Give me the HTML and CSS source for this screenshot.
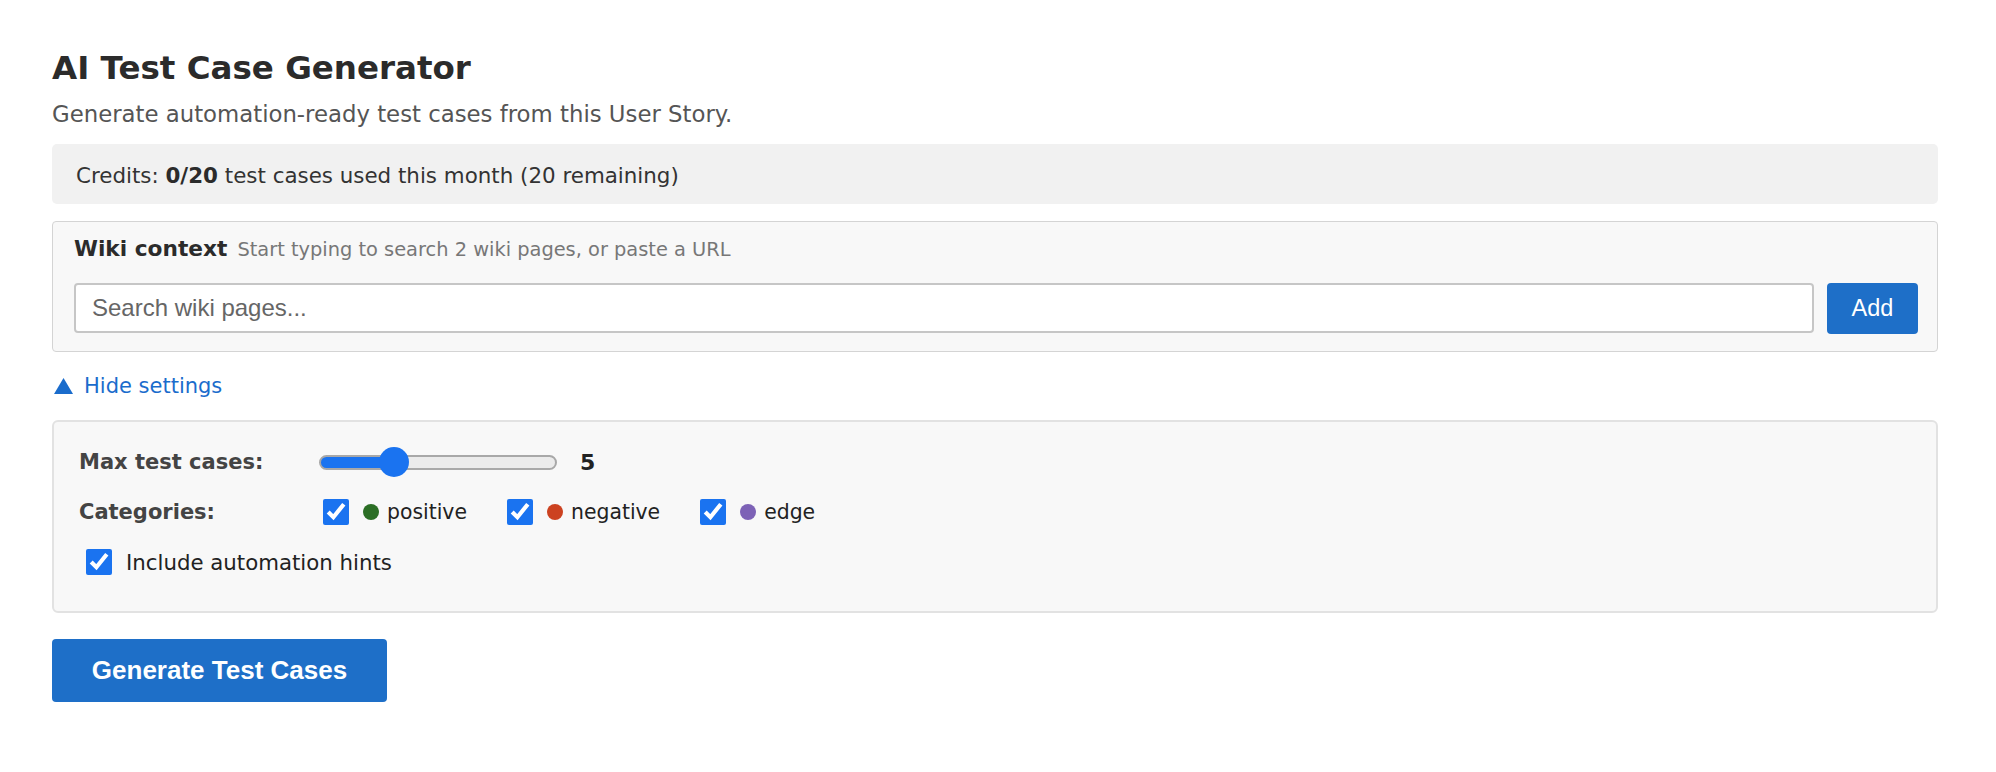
FILE: index.html
```html
<!DOCTYPE html>
<html lang="en">
<head>
  <meta charset="UTF-8" />
  <meta name="viewport" content="width=device-width, initial-scale=1" />
  <title>AI Test Case Generator</title>
  <link rel="stylesheet" href="styles.css">
</head>
<body>

<main class="generator">
  <h1 class="title">AI Test Case Generator</h1>
  <p class="subtitle">Generate automation-ready test cases from this User Story.</p>

  <div class="credits">Credits: <strong>0/20</strong> test cases used this month (20 remaining)</div>

  <!-- wiki pages picker -->
  <section class="wiki">
    <div class="wiki-head">
      <span class="wiki-label">Wiki context</span>
      <span class="wiki-help">Start typing to search 2 wiki pages, or paste a URL</span>
    </div>
    <div class="wiki-row">
      <input class="wiki-input" type="text" placeholder="Search wiki pages..." />
      <button class="btn btn-add">Add</button>
    </div>
  </section>

  <a class="toggle" href="#">
    <svg class="toggle-icon" width="19" height="16" viewBox="0 0 19 16"><polygon points="9.5,0 19,16 0,16" fill="currentColor"/></svg>
    Hide settings
  </a>

  <!-- generation settings -->
  <section class="settings">
    <div class="setting-row">
      <span class="setting-label">Max test cases:</span>
      <input class="range" type="range" min="1" max="15" value="5" />
      <span class="range-value">5</span>
    </div>
    <div class="setting-row">
      <span class="setting-label">Categories:</span>
      <div class="cats">
        <label class="cat"><input type="checkbox" checked /><span class="dot dot-positive"></span>positive</label>
        <label class="cat"><input type="checkbox" checked /><span class="dot dot-negative"></span>negative</label>
        <label class="cat"><input type="checkbox" checked /><span class="dot dot-edge"></span>edge</label>
      </div>
    </div>
    <label class="hints"><input type="checkbox" checked />Include automation hints</label>
  </section>

  <button class="btn btn-generate">Generate Test Cases</button>
</main>

</body>
</html>
```

FILE: styles.css
```css
*, *::before, *::after { margin: 0; padding: 0; box-sizing: border-box; }
body {
  font-family: Tahoma, 'DejaVu Sans', sans-serif;
  background: #fff;
  color: #333;
}
.generator {
  width: 1886px;
  margin-left: 52px;
  padding-top: 48px;
}
.title {
  font-size: 32.5px;
  line-height: 40px;
  font-weight: bold;
  color: #2b2b2b;
}
.subtitle {
  margin-top: 11px;
  font-size: 22.8px;
  line-height: 30px;
  color: #555;
}

.credits {
  margin-top: 15px;
  background: #f1f1f1;
  border-radius: 5px;
  padding: 17px 24px 13px;
  font-size: 21.4px;
  line-height: 30px;
  color: #333;
}
.credits strong { color: #2b2b2b; }

.wiki {
  margin-top: 17px;
  background: #f8f8f8;
  border: 1px solid #d4d4d4;
  border-radius: 4px;
  padding: 13px 19px 17px 21px;
}
.wiki-head {
  display: flex;
  align-items: baseline;
  gap: 10px;
  line-height: 28px;
}
.wiki-label {
  font-size: 21.7px;
  font-weight: bold;
  color: #2b2b2b;
}
.wiki-help {
  font-size: 19.4px;
  color: #777;
}
.wiki-row {
  display: flex;
  gap: 13px;
  margin-top: 19px;
}
.wiki-input {
  flex: 1;
  height: 50px;
  border: 2px solid #c6c6c6;
  border-radius: 4px;
  padding: 0 16px;
  font-family: 'Liberation Sans', Arial, sans-serif;
  font-size: 24px;
  color: #333;
  background: #fff;
}
.wiki-input::placeholder { color: #666; }

.btn {
  font-family: 'Liberation Sans', Arial, sans-serif;
  background: #1e6fc8;
  color: #fff;
  border: none;
  border-radius: 4px;
  cursor: pointer;
}
.btn-add {
  width: 91px;
  height: 51px;
  font-size: 23.5px;
}

.toggle {
  display: inline-flex;
  align-items: center;
  gap: 11px;
  margin: 19px 0 0 2px;
  font-size: 21px;
  line-height: 30px;
  color: #1a6ccc;
  text-decoration: none;
}
.toggle-icon { margin-top: -1px; }

.settings {
  margin-top: 19px;
  background: #f8f8f8;
  border: 2px solid #e2e2e2;
  border-radius: 6px;
  padding: 25px 24px 34px 25px;
  display: flex;
  flex-direction: column;
  gap: 20px;
}
.setting-row {
  display: flex;
  align-items: center;
  height: 30px;
}
.setting-label {
  width: 240px;
  font-size: 21px;
  font-weight: bold;
  color: #444;
}
.range {
  -webkit-appearance: none;
  appearance: none;
  width: 238px;
  height: 15px;
  border: 2px solid #a8a8a8;
  border-radius: 8px;
  background: linear-gradient(to right, #1a73f0 75px, #ebebeb 75px);
}
.range::-webkit-slider-thumb {
  -webkit-appearance: none;
  appearance: none;
  width: 30px;
  height: 30px;
  border-radius: 50%;
  background: #1a73f0;
  border: none;
}
.range-value {
  margin-left: 23px;
  font-size: 22px;
  font-weight: bold;
  color: #222;
}

.cats {
  display: flex;
  gap: 36px;
}
.cat, .hints {
  display: flex;
  align-items: center;
  font-size: 20.4px;
  color: #222;
}
.cat input, .hints input {
  width: 26px;
  height: 26px;
  margin: 0 0 0 4px;
  accent-color: #1a73f0;
}
.dot {
  width: 16px;
  height: 16px;
  border-radius: 50%;
  margin: 0 8px 0 14px;
}
.dot-positive { background: #2b6e25; }
.dot-negative { background: #cc4220; }
.dot-edge { background: #7d62b6; }
.hints { height: 30px; font-size: 21.3px; }
.hints input { margin: 0 14px 0 7px; }

.btn-generate {
  margin-top: 26px;
  width: 335px;
  height: 63px;
  font-size: 26px;
  font-weight: bold;
}
```
